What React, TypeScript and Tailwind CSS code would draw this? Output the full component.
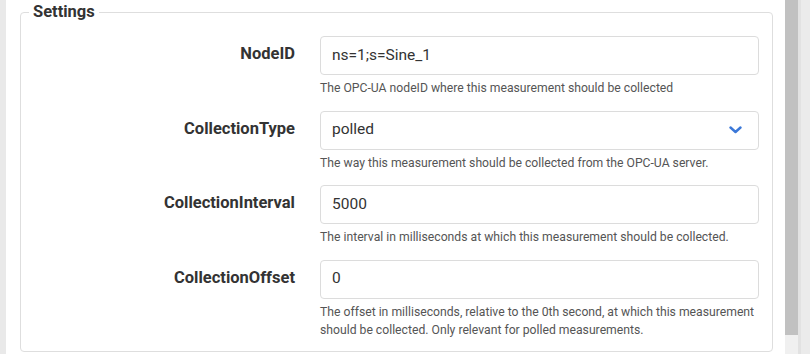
import { ReactNode } from "react";

const font = { fontFamily: "Roboto, 'Liberation Sans', sans-serif" };

function Row({ label, children, help }: { label: string; children: ReactNode; help: ReactNode }) {
  return (
    <div className="flex mb-[13.5px] last:mb-0">
      <label className="w-[275px] shrink-0 pt-[6px] pr-[1px] text-right text-[16.5px] leading-[24px] font-bold text-[#333]">
        {label}
      </label>
      <div className="flex-1 ml-[24px]">
        {children}
        <div className="mt-[4px] text-[12.2px] leading-[18px] text-[#555]">{help}</div>
      </div>
    </div>
  );
}

function TextBox({ value }: { value: string }) {
  return (
    <div className="h-[39px] flex items-center px-[11px] border border-[#dcdcdc] rounded-[4px] bg-white text-[15.5px] text-[#333]">
      {value}
    </div>
  );
}

export default function App() {
  return (
    <div className="w-[810px] h-[354px] flex bg-white overflow-hidden" style={font}>
      <div className="w-[6px] shrink-0 bg-[#e9e9e9]" />
      <div className="flex-1 flex">
        <div className="flex-1 pl-[14px] pr-[12px]">
          <fieldset className="mt-[1px] pl-0 pr-[13px] pt-[13px] pb-[12px] border border-[#dedede] rounded-[4px]">
            <legend className="ml-[8px] px-[4px] text-[16.5px] leading-[22px] font-bold text-[#333]">Settings</legend>
            <Row label="NodeID" help="The OPC-UA nodeID where this measurement should be collected">
              <TextBox value="ns=1;s=Sine_1" />
            </Row>
            <Row label="CollectionType" help="The way this measurement should be collected from the OPC-UA server.">
              <div className="h-[39px] flex items-center justify-between pl-[11px] pr-[16px] border border-[#dcdcdc] rounded-[4px] bg-white text-[15.5px] text-[#333]">
                <span>polled</span>
                <svg width="13" height="8" viewBox="0 0 13 8" fill="none">
                  <polyline points="1.5,1.5 6.5,6 11.5,1.5" stroke="#3b78d8" strokeWidth="2.4" strokeLinecap="round" strokeLinejoin="round" />
                </svg>
              </div>
            </Row>
            <Row label="CollectionInterval" help="The interval in milliseconds at which this measurement should be collected.">
              <TextBox value="5000" />
            </Row>
            <Row
              label="CollectionOffset"
              help={
                <>
                  The offset in milliseconds, relative to the 0th second, at which this measurement
                  <br />
                  should be collected. Only relevant for polled measurements.
                </>
              }
            >
              <TextBox value="0" />
            </Row>
          </fieldset>
        </div>
        <div className="w-[13px] shrink-0 flex flex-col bg-[#f0f0f0]">
          <div className="h-[335px] bg-[#c1c1c1]" />
        </div>
      </div>
      <div className="w-[3px] shrink-0 bg-[#e2e2e2]" />
      <div className="w-[9px] shrink-0 bg-[#ebebeb]" />
    </div>
  );
}
